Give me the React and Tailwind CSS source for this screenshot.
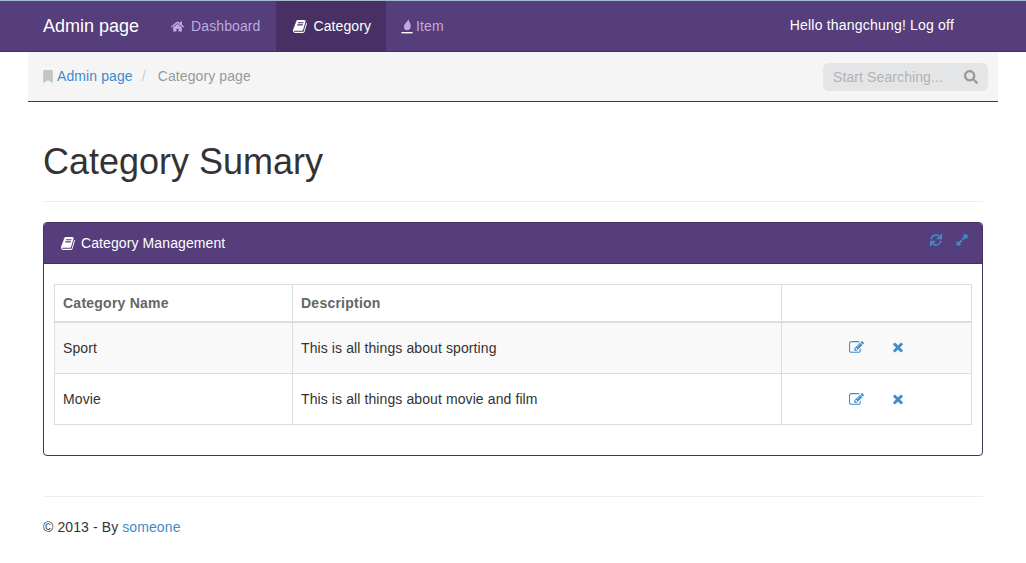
import { FaBookmark, FaExpandAlt, FaHome, FaSearch, FaSync, FaTimes } from 'react-icons/fa'

function BookIcon({ className }) {
  return (
    <svg viewBox="0 0 1792 1792" fill="currentColor" className={className}>
      <path d="M1639 478q40 57 18 129l-275 906q-19 64-76.5 107.5t-122.5 43.5h-923q-77 0-148.5-53.5t-99.5-131.5q-24-67-2-127 0-4 3-27t4-37q1-8-3-21.5t-3-19.5q2-11 8-21t16.5-23.5 16.5-23.5q23-38 45-91.5t30-91.5q3-10 .5-30t-.5-28q3-11 17-28t17-23q21-36 42-92t25-90q1-9-2.5-32t.5-28q4-13 22-30.5t22-22.5q19-26 42.5-84.5t27.5-96.5q1-8-3-25.5t-2-26.5q2-8 9-18t18-23 17-21q8-12 16.5-30.5t15-35 16-36 19.5-32 26.5-23.5 36-11.5 47.5 5.5l-1 3q38-9 51-9h761q74 0 114 56t18 130l-274 906q-36 119-71.5 153.5t-128.5 34.5h-869q-27 0-38 15-11 16-1 43 24 70 144 70h923q29 0 56-15.5t35-41.5l300-987q7-22 5-57 38 15 59 43zm-1064 2q-4 13 2 22.5t20 9.5h608q13 0 25.5-9.5t16.5-22.5l21-64q4-13-2-22.5t-20-9.5h-608q-13 0-25.5 9.5t-16.5 22.5zm-83 256q-4 13 2 22.5t20 9.5h608q13 0 25.5-9.5t16.5-22.5l21-64q4-13-2-22.5t-20-9.5h-608q-13 0-25.5 9.5t-16.5 22.5z" />
    </svg>
  )
}

function EditIcon({ className }) {
  return (
    <svg viewBox="0 0 1792 1792" fill="currentColor" className={className}>
      <path d="M888 1184l116-116-152-152-116 116v56h96v96h56zm440-720q-16-16-33 1l-350 350q-17 17-1 33t33-1l350-350q17-17 1-33zm80 594v190q0 119-84.5 203.5t-203.5 84.5h-832q-119 0-203.5-84.5t-84.5-203.5v-832q0-119 84.5-203.5t203.5-84.5h832q63 0 117 25 15 7 18 23 3 17-9 29l-49 49q-14 14-32 8-23-6-45-6h-832q-66 0-113 47t-47 113v832q0 66 47 113t113 47h832q66 0 113-47t47-113v-126q0-13 9-22l64-64q15-15 35-7t20 29zm-96-738l288 288-672 672h-288v-288zm444 132l-92 92-288-288 92-92q28-28 68-28t68 28l152 152q28 28 28 68t-28 68z" />
    </svg>
  )
}

function ItemIcon({ className }) {
  return (
    <svg viewBox="0 0 12 15" fill="currentColor" className={className}>
      <path d="M7.4 0C7.6 2.2 9.8 4.2 9.8 7.2C9.8 9.6 8.2 11.2 6 11.2C4 11.2 2.6 9.6 3 7.2C3.3 5.4 4.4 4.4 5.2 3.4C6.2 2.4 7 1.4 7.4 0Z" />
      <rect x="0.5" y="13" width="11" height="1.4" fill="#ffffff" />
    </svg>
  )
}

const rows = [
  { name: 'Sport', description: 'This is all things about sporting', rowClass: 'h-[52px] bg-[#f9f9f9]' },
  { name: 'Movie', description: 'This is all things about movie and film', rowClass: 'h-[51px]' },
]

function App() {
  return (
    <div className="min-h-[563px] bg-white font-['Liberation_Sans',Arial,sans-serif] text-sm tracking-[0.1px] text-[#333]">
      <nav className="flex h-[52px] border-t border-t-[#a3bccf] border-b border-b-[#46305f] bg-[#563d7c]">
        <a className="ml-[43px] mr-[17px] self-center text-lg leading-5 tracking-normal text-white">Admin page</a>
        <a className="flex items-center pl-[15px] pr-[16px] text-[#bfaadf]">
          <FaHome className="mr-[7px] h-[13px] w-[13px]" />
          Dashboard
        </a>
        <a className="flex items-center bg-[#483064] pl-[17px] pr-[15px] text-white">
          <BookIcon className="mr-[5px] h-[15px] w-[15px]" />
          Category
        </a>
        <a className="flex items-center px-[15px] text-[#bfaadf]">
          <ItemIcon className="mr-[3px] h-[15px] w-[12px]" />
          Item
        </a>
        <div className="ml-[331px] self-center pb-[2px] tracking-[0.2px] text-white">Hello thangchung! Log off</div>
      </nav>

      <div className="mx-[28px] flex h-[50px] items-center justify-between border-b border-b-[#46305f] bg-[#f5f5f5] pl-[15px] pr-[10px]">
        <div className="flex items-center pb-[1px]">
          <FaBookmark className="mr-[4px] h-[13px] w-[10px] text-[#c4c4c4]" />
          <a className="text-[#428bca]">Admin page</a>
          <span className="px-[9px] text-[#ccc]">/</span>
          <span className="pl-[3px] text-[#999]">Category page</span>
        </div>
        <div className="flex h-[28px] w-[165px] items-center justify-between rounded-md bg-[#e4e5e7] pl-[10px] pr-[10px] text-[#b3b3b3]">
          <span>Start Searching...</span>
          <FaSearch className="h-[14px] w-[14px] text-[#999]" />
        </div>
      </div>

      <main className="mx-[43px]">
        <div className="mt-[40px] border-b border-[#eee] pb-[19px]">
          <h1 className="text-[36px] leading-[40px] font-normal tracking-normal text-[#333]">Category Sumary</h1>
        </div>

        <section className="mt-[20px] rounded border border-[#46305f]">
          <div className="flex h-[40px] items-center justify-between rounded-t-[3px] bg-[#563d7c] pl-[17px] pr-[14px] text-white">
            <div className="flex items-center">
              <BookIcon className="mr-[5px] h-[15px] w-[15px]" />
              Category Management
            </div>
            <div className="mb-[6px] flex items-center gap-[14px] text-[#428bca]">
              <FaSync className="h-[12px] w-[12px]" />
              <FaExpandAlt className="h-[12px] w-[12px]" stroke="currentColor" strokeWidth="30" />
            </div>
          </div>

          <div className="border-t border-t-[#46305f] px-[10px] pt-[20px] pb-[30px]">
            <table className="w-full table-fixed border-collapse border border-[#ddd]">
              <thead>
                <tr className="h-[37px] border-b-2 border-[#ddd] text-left text-[#666]">
                  <th className="w-[238px] border border-b-2 border-[#ddd] px-2 font-bold tracking-[0.24px]">Category Name</th>
                  <th className="w-[489px] border border-b-2 border-[#ddd] px-2 font-bold tracking-[0.24px]">Description</th>
                  <th className="border border-b-2 border-[#ddd] px-2"></th>
                </tr>
              </thead>
              <tbody>
                {rows.map((row) => (
                  <tr key={row.name} className={row.rowClass}>
                    <td className="border border-[#ddd] px-2">{row.name}</td>
                    <td className="border border-[#ddd] px-2">{row.description}</td>
                    <td className="border border-[#ddd] px-2">
                      <div className="flex items-center pl-[59px] text-[#428bca]">
                        <EditIcon className="h-[15px] w-[15px]" />
                        <FaTimes className="ml-[28px] h-[13px] w-[12px]" stroke="currentColor" strokeWidth="30" />
                      </div>
                    </td>
                  </tr>
                ))}
              </tbody>
            </table>
          </div>
        </section>

        <footer className="mt-[40px] border-t border-[#eee] pt-[20px]">
          © 2013 - By <a className="text-[#428bca]">someone</a>
        </footer>
      </main>
    </div>
  )
}

export default App
